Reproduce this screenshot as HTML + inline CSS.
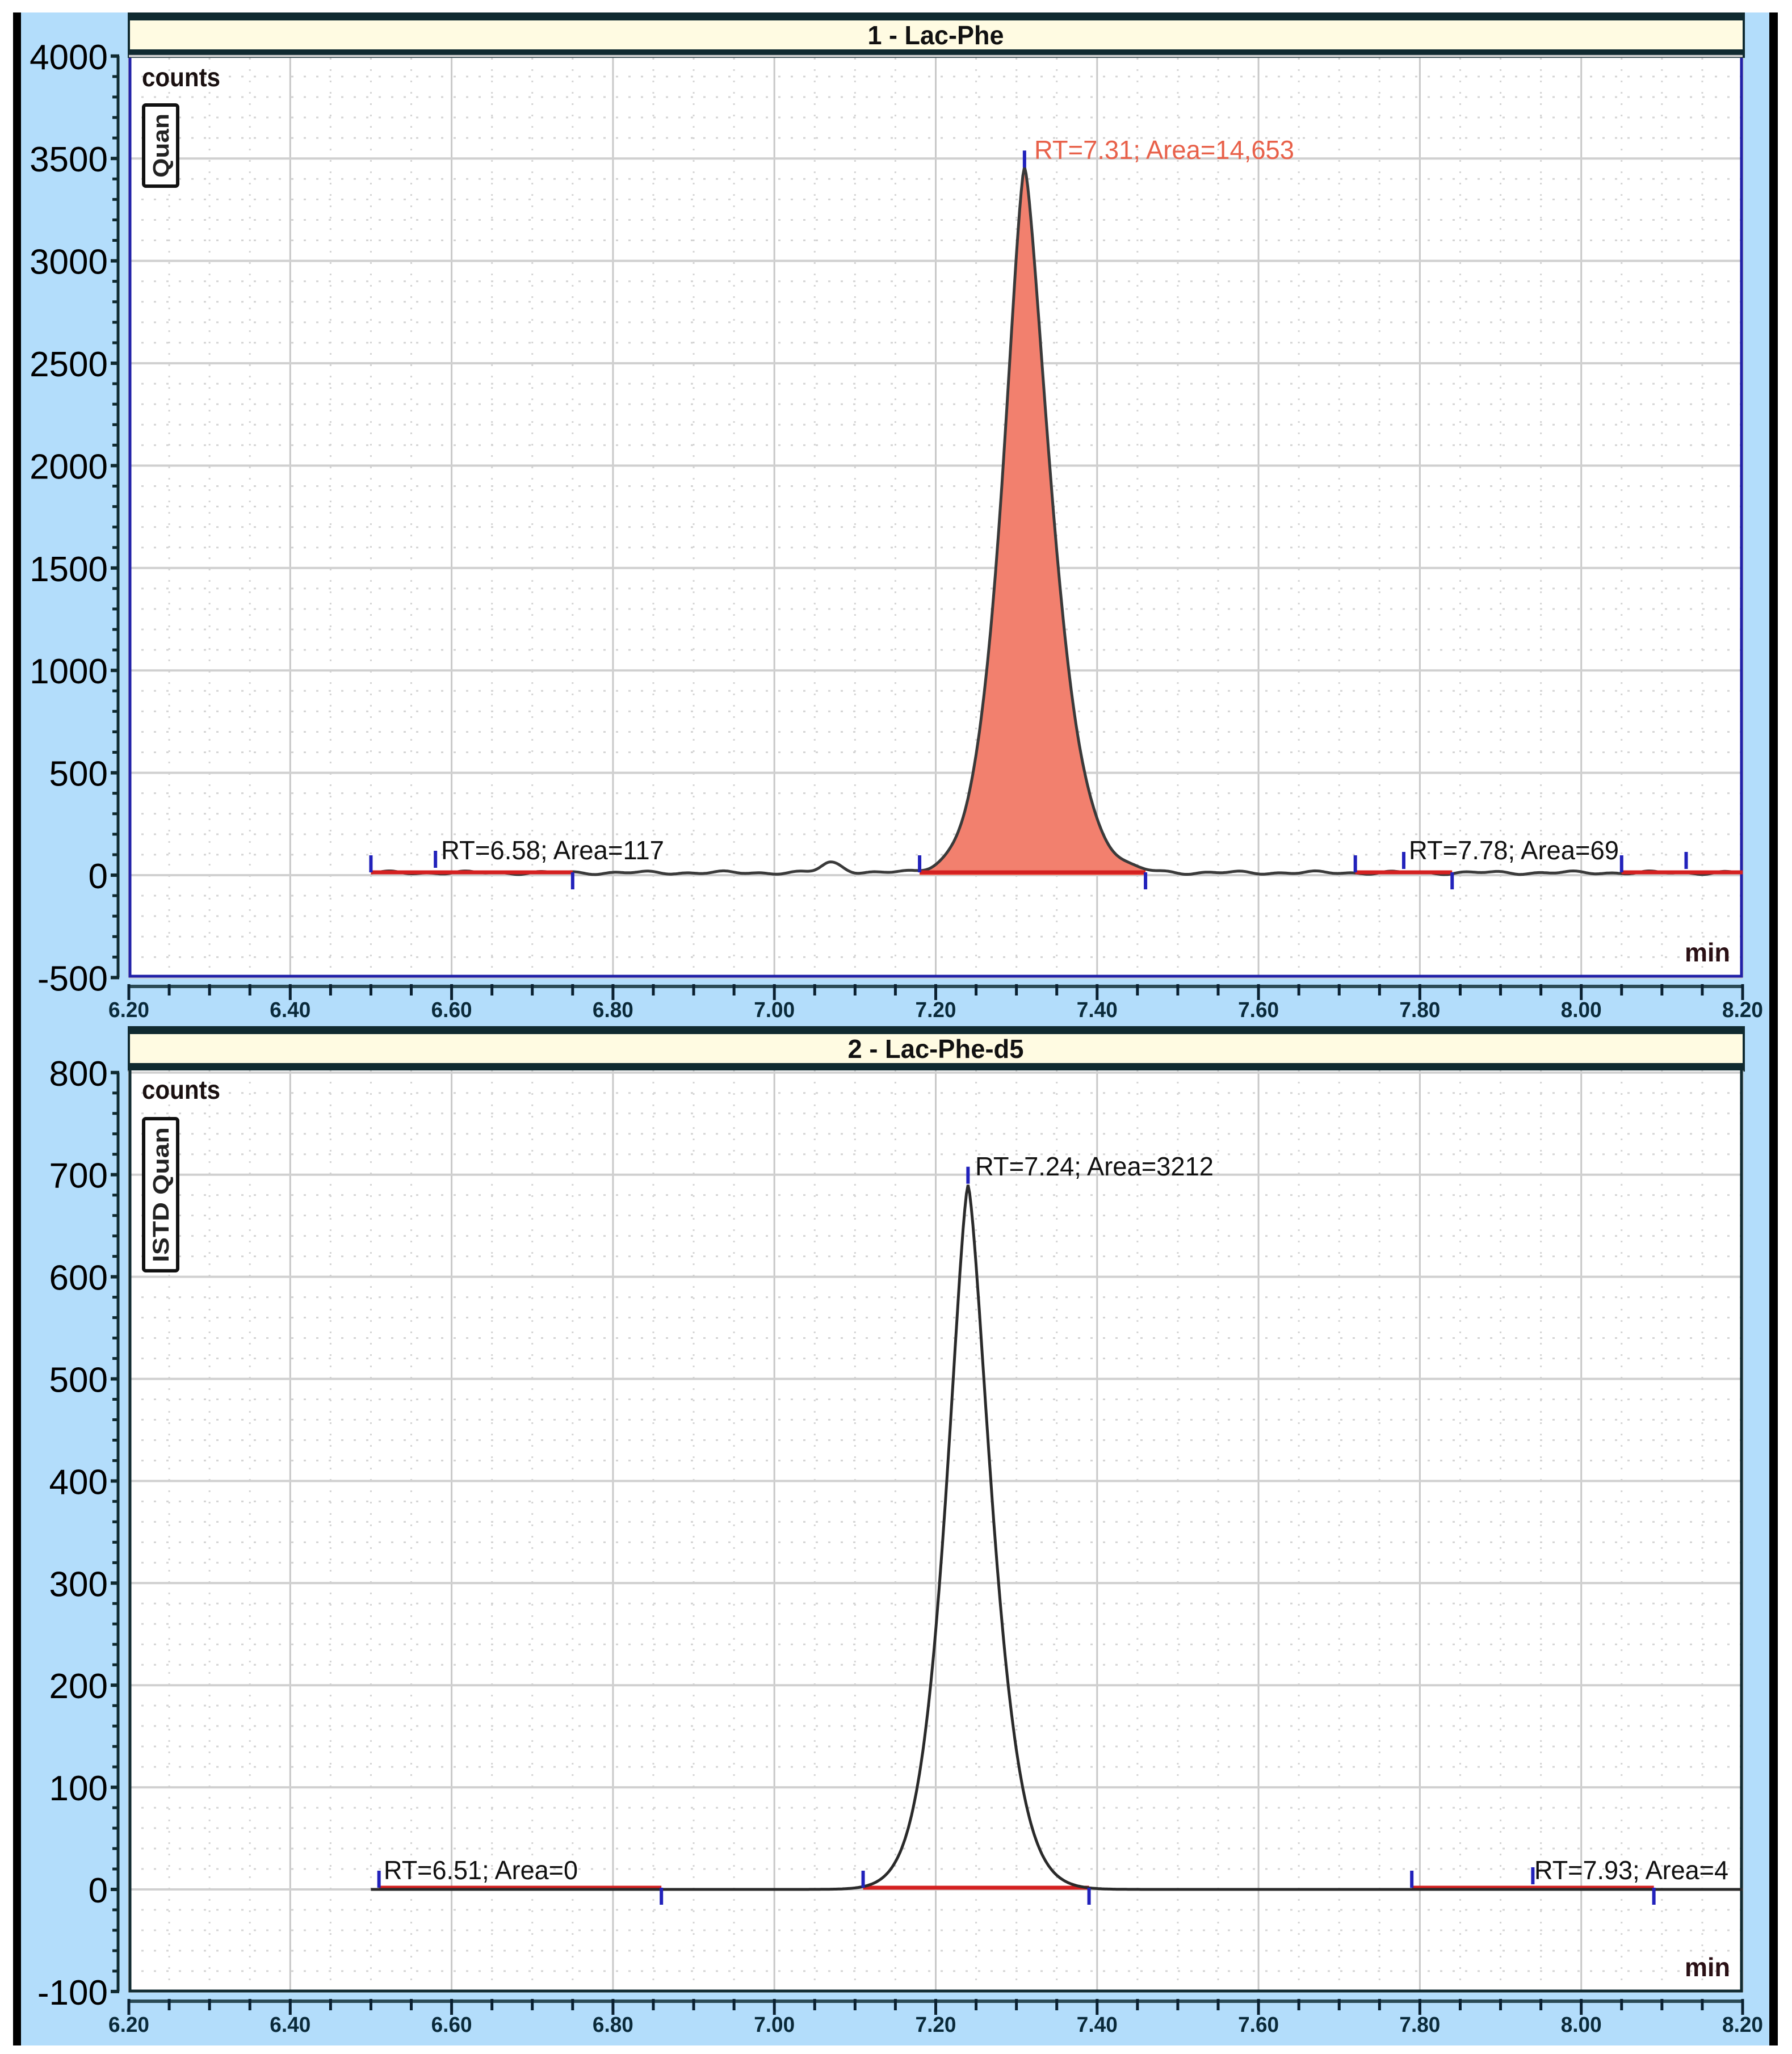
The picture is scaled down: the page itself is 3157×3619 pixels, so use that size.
<!DOCTYPE html>
<html><head><meta charset="utf-8"><style>
html,body{margin:0;padding:0;background:#fff;width:3157px;height:3619px;overflow:hidden}
svg{display:block}
text{font-family:"Liberation Sans",sans-serif}
</style></head><body>
<svg id="s" width="3157" height="3619" viewBox="0 0 3157 3619" xmlns="http://www.w3.org/2000/svg">
<rect x="0" y="0" width="3157" height="3619" fill="#fff"/>
<rect x="23" y="22" width="3109" height="3582" fill="#b3ddfb"/>
<rect x="23" y="22" width="14" height="3582" fill="#000"/>
<rect x="3117" y="22" width="15" height="3582" fill="#000"/>
<g id="g1"></g>
<g id="g2"></g>
</svg>
<script>
var NS="http://www.w3.org/2000/svg";
function el(p,n,a,t){var e=document.createElementNS(NS,n);for(var k in a)e.setAttribute(k,a[k]);if(t!==undefined)e.textContent=t;p.appendChild(e);return e;}
var X0=227,X1=3070;
function X(t){return X0+(t-6.2)*(X1-X0)/2;}
function panel(g,o){
  el(g,'rect',{x:X0-2,y:o.tb,width:X1-X0+6,height:80,fill:'#102a30'});
  el(g,'rect',{x:X0+2,y:o.tb+14,width:X1-X0-2,height:51,fill:'#fffbe2'});
  el(g,'text',{x:(X0+X1)/2-(o.tw/2),y:o.tb+56,'font-size':46,'font-weight':'bold',fill:'#111',textLength:o.tw,lengthAdjust:'spacingAndGlyphs'},o.title);
  el(g,'rect',{x:X0,y:o.py0,width:X1-X0,height:o.py1-o.py0,fill:'#fff'});
  for(var i=0;i<=40;i++){var t=6.2+i*0.05,x=X(t);
    if(i%4==0) el(g,'line',{x1:x,y1:o.py0,x2:x,y2:o.py1,stroke:'#c8c8c8','stroke-width':3});
    else el(g,'line',{x1:x,y1:o.py0,x2:x,y2:o.py1,stroke:'#d4d4d4','stroke-width':3,'stroke-dasharray':'3 17'});
  }
  for(var v=o.vmin;v<=o.vmax;v+=o.minor){var y=o.Y(v);
    if(Math.abs(v%o.major)<1e-6) el(g,'line',{x1:X0,y1:y,x2:X1,y2:y,stroke:'#d0d0d0','stroke-width':4});
    else el(g,'line',{x1:X0,y1:y,x2:X1,y2:y,stroke:'#d4d4d4','stroke-width':3,'stroke-dasharray':'4 18'});
  }
  el(g,'line',{x1:208,y1:o.Y(o.vmax),x2:208,y2:o.Y(o.vmin),stroke:'#102a30','stroke-width':5});
  for(var v=o.vmin;v<=o.vmax;v+=o.minor){var y=o.Y(v);
    var maj=Math.abs(v%o.major)<1e-6;
    el(g,'line',{x1:maj?195:198,y1:y,x2:210,y2:y,stroke:'#102a30','stroke-width':maj?6:5});
    if(maj) el(g,'text',{x:190,y:y+23,'font-size':62,'text-anchor':'end',fill:'#000'},String(v));
  }
  el(g,'line',{x1:X0,y1:o.py1+16,x2:X1,y2:o.py1+16,stroke:'#2a4a55','stroke-width':6});
  for(var i=0;i<=40;i++){var x=X(6.2+i*0.05);
    el(g,'line',{x1:x,y1:o.py1+12,x2:x,y2:o.py1+(i%4==0?40:32),stroke:'#0a2030','stroke-width':5});}
  for(var i=0;i<=10;i++){var t=6.2+i*0.2;
    el(g,'text',{x:X(t)-36,y:o.py1+70,'font-size':38,'font-weight':'bold',fill:'#0a2a3a',textLength:72,lengthAdjust:'spacingAndGlyphs'},t.toFixed(2));}
  el(g,'path',{d:'M'+(X0+2)+' '+o.py0+' V'+(o.py1-2)+' H'+(X1-2)+' V'+o.py0,fill:'none',stroke:o.bc,'stroke-width':5});
  el(g,'text',{x:250,y:o.py0+50,'font-size':46,'font-weight':'bold',fill:'#1a1010',textLength:138,lengthAdjust:'spacingAndGlyphs'},'counts');
  el(g,'text',{x:2968,y:o.py1-28,'font-size':46,'font-weight':'bold',fill:'#2a1015',textLength:80,lengthAdjust:'spacingAndGlyphs'},'min');
  el(g,'rect',{x:253,y:o.bx0,width:60,height:o.bx1-o.bx0,fill:'#fff',stroke:'#111','stroke-width':6,rx:4});
  var cx=283,cy=(o.bx0+o.bx1)/2;
  el(g,'text',{x:cx,y:cy,'font-size':40,'font-weight':'bold',fill:'#222','text-anchor':'middle',transform:'rotate(-90 '+cx+' '+cy+') translate(0 14)',textLength:o.bx1-o.bx0-30,lengthAdjust:'spacingAndGlyphs'},o.box);
}
function peak(t,c,h,sl,sr){var s=t<c?sl:sr;return h*Math.exp(-Math.pow(Math.abs(t-c)/s,1.45));}
function gpk(t,c,h,sl,sr){var s=t<c?sl:sr;return h*Math.exp(-0.5*Math.pow((t-c)/s,2));}
function curvePts(o,f){var p=[];for(var t=6.5;t<=8.2001;t+=0.002)p.push([X(t),o.Y(f(t))]);return p;}
function toD(p){return 'M'+p.map(function(q){return q[0].toFixed(1)+' '+q[1].toFixed(1);}).join(' L');}
function tick(g,t,y,up){el(g,'line',{x1:X(t),y1:y,x2:X(t),y2:up?y-30:y+30,stroke:'#2222bb','stroke-width':6});}
function red(g,a,b,y){el(g,'line',{x1:X(a),y1:y,x2:X(b),y2:y,stroke:'#d42020','stroke-width':7});}
function ann(g,x,y,w,txt,col){el(g,'text',{x:x,y:y,'font-size':46,fill:col,textLength:w,lengthAdjust:'spacingAndGlyphs'},txt);}

var o1={tb:22,title:'1 - Lac-Phe',tw:240,py0:102,py1:1722,vmin:-500,vmax:4000,major:500,minor:100,bc:'#2020a8',box:'Quan',bx0:185,bx1:328,
  Y:function(v){return 1542-v*0.3608;}};
var g1=document.getElementById('g1');panel(g1,o1);
var f1=function(t){return 12+5*Math.sin(t*60)+4*Math.sin(t*137)+gpk(t,7.07,50,0.012,0.015)+peak(t,7.31,3450,0.04,0.047);};
var p1=curvePts(o1,f1);
var fp=p1.filter(function(q){return q[0]>=X(7.18)&&q[0]<=X(7.46);});
el(g1,'path',{d:toD(fp)+' L'+X(7.46)+' '+o1.Y(0)+' L'+X(7.18)+' '+o1.Y(0)+' Z',fill:'#f2806e'});
el(g1,'path',{d:toD(p1),fill:'none',stroke:'#3a3a3a','stroke-width':5});
var y0=o1.Y(0)-5;
red(g1,6.5,6.75,y0);red(g1,7.18,7.46,y0);red(g1,7.72,7.84,y0);red(g1,8.05,8.2,y0);
tick(g1,6.5,y0,1);tick(g1,6.58,y0-8,1);tick(g1,6.75,y0,0);
tick(g1,7.18,y0,1);tick(g1,7.31,o1.Y(3450)-2,1);tick(g1,7.46,y0,0);
tick(g1,7.72,y0,1);tick(g1,7.78,y0-6,1);tick(g1,7.84,y0,0);
tick(g1,8.05,y0,1);tick(g1,8.13,y0-6,1);
ann(g1,1822,280,458,'RT=7.31; Area=14,653','#e8614a');
ann(g1,777,1514,393,'RT=6.58; Area=117','#111');
ann(g1,2482,1514,370,'RT=7.78; Area=69','#111');

var o2={tb:1808,title:'2 - Lac-Phe-d5',tw:310,py0:1886,py1:3510,vmin:-100,vmax:800,major:100,minor:20,bc:'#102a30',box:'ISTD Quan',bx0:1971,bx1:2239,
  Y:function(v){return 3329-v*1.799;}};
var g2=document.getElementById('g2');panel(g2,o2);
var f2=function(t){return peak(t,7.24,690,0.04,0.043);};
var p2=curvePts(o2,f2);
var z=o2.Y(0)-3;
red(g2,6.51,6.86,z);red(g2,7.11,7.39,z);red(g2,7.79,8.09,z);
el(g2,'path',{d:toD(p2),fill:'none',stroke:'#2a2a2a','stroke-width':5});
tick(g2,6.51,z,1);tick(g2,6.86,z,0);tick(g2,7.11,z,1);tick(g2,7.24,o2.Y(690)-2,1);tick(g2,7.39,z,0);
tick(g2,7.79,z,1);tick(g2,7.94,z-6,1);tick(g2,8.09,z,0);
ann(g2,1718,2071,420,'RT=7.24; Area=3212','#111');
ann(g2,676,3311,342,'RT=6.51; Area=0','#111');
ann(g2,2703,3311,342,'RT=7.93; Area=4','#111');
</script>
</body></html>
